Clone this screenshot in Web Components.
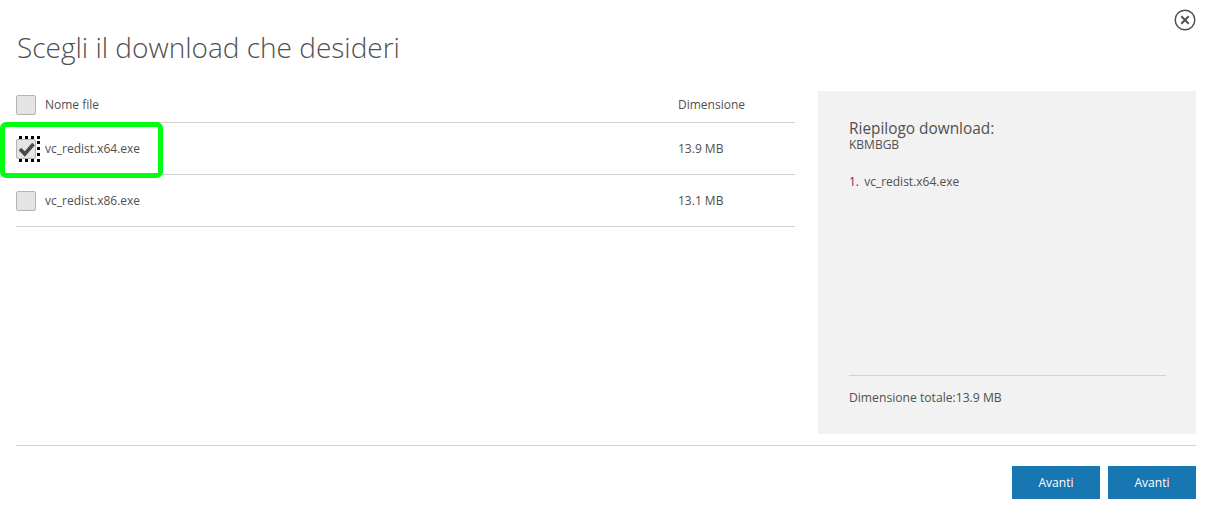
<!DOCTYPE html>
<html lang="it">
<head>
<meta charset="utf-8">
<title>Scegli il download</title>
<style>
  html, body { margin: 0; background: #fff; }
  body { font-family: "Open Sans", "Liberation Sans", sans-serif; color: #505050; }
</style>
</head>
<body>
<download-dialog>
  <file-row slot="rows" header name="Nome file" size="Dimensione"></file-row>
  <file-row slot="rows" checked focused name="vc_redist.x64.exe" size="13.9 MB"></file-row>
  <file-row slot="rows" name="vc_redist.x86.exe" size="13.1 MB"></file-row>
  <summary-panel slot="summary" file="vc_redist.x64.exe" total="13.9 MB"></summary-panel>
  <blue-button slot="actions">Avanti</blue-button>
  <blue-button slot="actions">Avanti</blue-button>
</download-dialog>

<script>
// dialog shell
const dialogTemplate = document.createElement('template');
dialogTemplate.innerHTML = /* html */`
  <style>
    :host { display: block; position: relative; width: 1211px; height: 510px; box-sizing: border-box; padding: 0 15px 0 16px; overflow: hidden; }
    #close { position: absolute; left: 1174px; top: 9px; width: 22px; height: 22px; }
    h1 { margin: 0; padding: 29px 0 0 1px; height: 91px; box-sizing: border-box; font-weight: 300; font-size: 28px; line-height: 37px; color: #505050; }
    #main { display: flex; justify-content: space-between; height: 343px; }
    #list { width: 779px; margin-top: -3px; }
    #rule { height: 1px; background: #d2d2d2; margin-top: 11px; }
    #actions { display: flex; justify-content: flex-end; gap: 8px; margin-top: 20px; }
    #marker { position: absolute; left: 0; top: 122px; width: 163px; height: 56px; box-sizing: border-box; border: 5px solid #00ff12; border-radius: 6px; pointer-events: none; }
  </style>
  <svg id="close" viewBox="0 0 22 22" fill="none" stroke="#505050">
    <circle cx="11" cy="11" r="9.8" stroke-width="1.4"/>
    <path d="M7.3 7.3 14.7 14.7M14.7 7.3 7.3 14.7" stroke-width="2"/>
  </svg>
  <h1>Scegli il download che desideri</h1>
  <div id="main">
    <div id="list"><slot name="rows"></slot></div>
    <slot name="summary"></slot>
  </div>
  <div id="rule"></div>
  <div id="actions"><slot name="actions"></slot></div>
  <div id="marker"></div>
`;

class DownloadDialog extends HTMLElement {
  constructor() {
    super();
    this.attachShadow({ mode: 'open' });
    this.shadowRoot.appendChild(dialogTemplate.content.cloneNode(true));
  }
}

// one table row, also used for the header
const rowTemplate = document.createElement('template');
rowTemplate.innerHTML = /* html */`
  <style>
    :host { display: flex; align-items: center; isolation: isolate; height: 52px; box-sizing: border-box; border-bottom: 1px solid #d2d2d2; font-size: 12px; color: #505050; }
    :host([header]) { height: 35px; }
    :host([header]) #name, :host([header]) #size { padding-bottom: 2px; }
    #box { position: relative; flex: none; width: 20px; height: 20px; box-sizing: border-box; border: 1px solid #b4b4b4; border-radius: 2px; background: #e4e4e4; margin-right: 9px; }
    #box svg { display: none; position: absolute; left: 0; top: 1px; width: 18px; height: 16px; overflow: visible; }
    :host([checked]) #box svg { display: block; }
    /* focus ring sits behind the box, only its top, right and bottom show */
    :host([focused]) #box::before { content: ""; position: absolute; z-index: -1; left: 2px; top: -4px; width: 21px; height: 26px; box-sizing: border-box; border: 3px dotted #000; }
    #name { flex: 1; }
    #size { width: 117px; }
  </style>
  <div id="box">
    <svg viewBox="0 0 18 16"><path d="M3 8 7.8 13 16.5 3" fill="none" stroke="#4a4a4a" stroke-width="3.6"/></svg>
  </div>
  <div id="name"></div>
  <div id="size"></div>
`;

class FileRow extends HTMLElement {
  constructor() {
    super();
    this.attachShadow({ mode: 'open' });
    this.shadowRoot.appendChild(rowTemplate.content.cloneNode(true));
  }
  connectedCallback() {
    this.shadowRoot.getElementById('name').textContent = this.getAttribute('name');
    this.shadowRoot.getElementById('size').textContent = this.getAttribute('size');
  }
}

// grey panel on the right
const summaryTemplate = document.createElement('template');
summaryTemplate.innerHTML = /* html */`
  <style>
    :host { display: flex; flex-direction: column; width: 378px; height: 343px; box-sizing: border-box; padding: 29px 30px 0 31px; background: #f2f2f2; color: #505050; font-size: 12px; }
    #title { font-size: 15.4px; line-height: 18px; }
    #sub { font-size: 12px; line-height: 13px; }
    #item { margin-top: 23px; line-height: 16px; }
    #num { color: #7a1f4c; margin-right: 2px; }
    #total { margin-top: auto; margin-bottom: 28px; border-top: 1px solid #d2d2d2; padding-top: 13px; line-height: 17px; font-size: 12.15px; }
  </style>
  <div id="title">Riepilogo download:</div>
  <div id="sub">KBMBGB</div>
  <div id="item"><span id="num">1.</span> <span id="file"></span></div>
  <div id="total"></div>
`;

class SummaryPanel extends HTMLElement {
  constructor() {
    super();
    this.attachShadow({ mode: 'open' });
    this.shadowRoot.appendChild(summaryTemplate.content.cloneNode(true));
  }
  connectedCallback() {
    this.shadowRoot.getElementById('file').textContent = this.getAttribute('file');
    this.shadowRoot.getElementById('total').textContent = 'Dimensione totale:' + this.getAttribute('total');
  }
}

class BlueButton extends HTMLElement {
  constructor() {
    super();
    this.attachShadow({ mode: 'open' }).innerHTML = /* html */`
      <style>
        :host { display: flex; align-items: center; justify-content: center; width: 88px; height: 33px; background: #1777b3; color: #fff; font-size: 12px; }
      </style>
      <slot></slot>
    `;
  }
}

customElements.define('download-dialog', DownloadDialog);
customElements.define('file-row', FileRow);
customElements.define('summary-panel', SummaryPanel);
customElements.define('blue-button', BlueButton);
</script>
</body>
</html>
